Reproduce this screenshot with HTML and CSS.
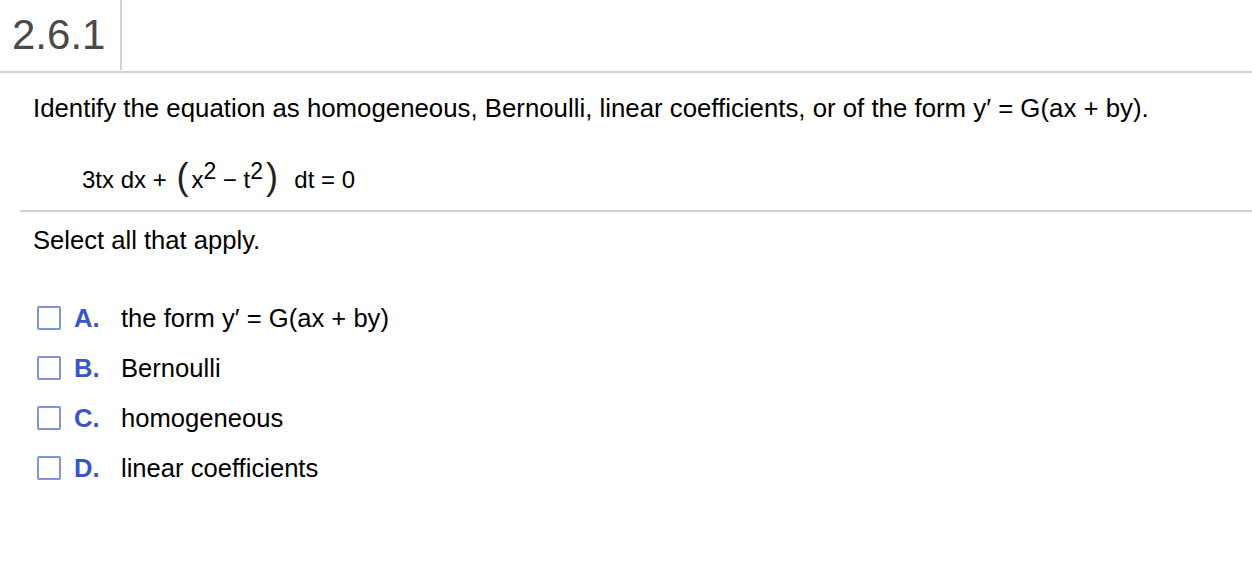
FILE: index.html
```html
<!DOCTYPE html>
<html>
<head>
<meta charset="utf-8">
<link rel="stylesheet" href="styles.css">
</head>
<body>
<div class="header">
  <div class="title">2.6.1</div>
</div>
<div class="question">
  <p class="prompt">Identify the equation as homogeneous, Bernoulli, linear coefficients, or of the form y&prime; = G(ax + by).</p>
  <div class="equation">3tx dx + <span class="paren">(</span>x<sup>2</sup> &minus; t<sup>2</sup><span class="paren">)</span>&nbsp; dt = 0</div>
</div>
<div class="divider"></div>
<div class="answers">
  <p class="instr">Select all that apply.</p>
  <ul class="options">
    <li class="option"><span class="box"></span><span class="letter">A.</span><span class="text">the form y&prime; = G(ax + by)</span></li>
    <li class="option"><span class="box"></span><span class="letter">B.</span><span class="text">Bernoulli</span></li>
    <li class="option"><span class="box"></span><span class="letter">C.</span><span class="text">homogeneous</span></li>
    <li class="option"><span class="box"></span><span class="letter">D.</span><span class="text">linear coefficients</span></li>
  </ul>
</div>
</body>
</html>
```
FILE: styles.css
```css
body {
  margin: 0;
  font-family: "Liberation Sans", Arial, sans-serif;
  color: #000;
  background: #fff;
}
.header {
  display: flex;
  height: 71px;
  border-bottom: 2px solid #d0d1dc;
}
.title {
  width: 108px;
  padding-left: 12px;
  border-right: 2px solid #d0d1dc;
  font-size: 42px;
  color: #4a4a4a;
  display: flex;
  align-items: center;
  height: 70px;
}
.question {
  padding: 0 33px;
}
.prompt {
  margin: 0;
  padding-top: 20px;
  font-size: 25.8px;
  line-height: 30px;
}
.equation {
  margin-left: 49px;
  margin-top: 33px;
  font-size: 24px;
  line-height: 40px;
  height: 40px;
  padding-bottom: 14px;
  white-space: nowrap;
}
.equation sup {
  font-size: 23px;
  vertical-align: 0;
  position: relative;
  top: -9px;
}
.paren {
  font-size: 36px;
  font-weight: 300;
  position: relative;
  top: 1px;
  color: #222;
  margin: 0 3px;
}
.divider {
  margin-left: 20px;
  border-top: 2px solid #d0d1dc;
}
.answers {
  padding: 0 33px;
}
.instr {
  margin: 0;
  padding-top: 13px;
  font-size: 25.6px;
  line-height: 30px;
}
.options {
  list-style: none;
  margin: 0;
  padding: 38px 0 0 4px;
}
.option {
  display: flex;
  align-items: center;
  height: 50px;
  font-size: 25.6px;
}
.box {
  width: 20px;
  height: 20px;
  border: 2px solid #7d95dc;
  border-radius: 2px;
  margin-right: 13px;
  flex: none;
}
.letter {
  color: #3a56c5;
  font-weight: bold;
  width: 47px;
  flex: none;
}
```
